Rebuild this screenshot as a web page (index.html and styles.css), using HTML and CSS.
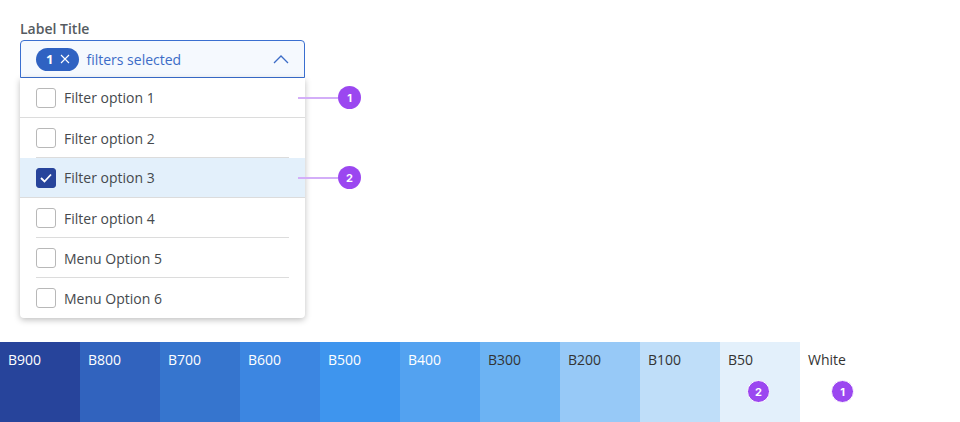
FILE: index.html
```html
<!DOCTYPE html>
<html lang="en">
<head>
  <meta charset="UTF-8" />
  <meta name="viewport" content="width=device-width, initial-scale=1.0">
  <title>Multi select dropdown</title>
  <link rel="stylesheet" href="styles.css">
</head>
<body>

<div class="top">
  <div class="field">
    <div class="label">Label Title</div>
    <div class="select">
      <span class="chip">1
        <svg width="10" height="10" viewBox="0 0 10 10"><path d="M1 1 L9 9 M9 1 L1 9" stroke="#fff" stroke-width="1.1" fill="none"/></svg>
      </span>
      <span class="placeholder">filters selected</span>
      <svg class="chevron" width="16" height="9" viewBox="0 0 16 9"><path d="M1 8 L8 1 L15 8" stroke="#3c6cc7" stroke-width="1.3" fill="none"/></svg>
    </div>

    <div class="menu">
      <div class="option full">
        <span class="box"></span>Filter option 1
        <div class="note"><span class="line"></span><span class="badge">1</span></div>
      </div>
      <div class="option inset"><span class="box"></span>Filter option 2</div>
      <div class="option selected full">
        <span class="box checked">
          <svg width="12" height="10" viewBox="0 0 12 10"><path d="M1 5 L4.5 8.5 L11 1.5" stroke="#fff" stroke-width="1.8" fill="none"/></svg>
        </span>Filter option 3
        <div class="note"><span class="line"></span><span class="badge">2</span></div>
      </div>
      <div class="option inset"><span class="box"></span>Filter option 4</div>
      <div class="option inset"><span class="box"></span>Menu Option 5</div>
      <div class="option"><span class="box"></span>Menu Option 6</div>
    </div>
  </div>
</div>

<div class="palette">
  <div class="swatch dark" style="background:#27449b">B900</div>
  <div class="swatch dark" style="background:#3163be">B800</div>
  <div class="swatch dark" style="background:#3675ce">B700</div>
  <div class="swatch dark" style="background:#3c86e1">B600</div>
  <div class="swatch dark" style="background:#3e95ee">B500</div>
  <div class="swatch dark" style="background:#53a2f0">B400</div>
  <div class="swatch" style="background:#6cb3f3">B300</div>
  <div class="swatch" style="background:#97c9f7">B200</div>
  <div class="swatch" style="background:#bfdef9">B100</div>
  <div class="swatch" style="background:#e3f0fb">B50<span class="badge ring">2</span></div>
  <div class="swatch" style="background:#ffffff">White<span class="badge ring">1</span></div>
</div>

</body>
</html>
```

FILE: styles.css
```css
* { box-sizing: border-box; }
html, body {
  margin: 0;
  padding: 0;
  background: #ffffff;
  font-family: "Open Sans", "Noto Sans", sans-serif;
  width: 100%;
  height: 100%;
  overflow: hidden;
}

.top {
  height: 342px;
  padding: 19px 0 0 20px;
}

.field {
  width: 285px;
  position: relative;
}

.label {
  font-size: 14px;
  font-weight: 600;
  color: #555b61;
  line-height: 20px;
  margin-bottom: 1px;
}

.select {
  height: 38px;
  border: 1px solid #3a6fd0;
  border-radius: 4px 4px 0 0;
  background: #f5f9fe;
  display: flex;
  align-items: center;
  padding: 0 15px;
}

.chip {
  display: flex;
  align-items: center;
  gap: 7px;
  height: 23px;
  padding: 0 9px 0 10px;
  border-radius: 12px;
  background: #2f62c2;
  color: #fff;
  font-size: 13px;
  font-weight: 700;
}

.placeholder {
  margin-left: 7px;
  color: #3c6cc7;
  font-size: 14px;
  flex: 1;
}

.menu {
  background: #fff;
  border-radius: 0 0 4px 4px;
  box-shadow: 0 2px 6px rgba(0, 0, 0, 0.25);
}

.option {
  height: 40px;
  display: flex;
  align-items: center;
  padding-left: 16px;
  font-size: 14px;
  color: #45494d;
  position: relative;
}

.option.full { border-bottom: 1px solid #dcdcdc; }

.option.inset::after {
  content: "";
  position: absolute;
  left: 16px;
  right: 16px;
  bottom: 0;
  border-bottom: 1px solid #dcdcdc;
}

.option.selected { background: #e3f0fb; }

.box {
  width: 20px;
  height: 20px;
  border: 1px solid #b8b8b8;
  border-radius: 3px;
  margin-right: 8px;
  display: flex;
  align-items: center;
  justify-content: center;
  background: #fff;
}

.box.checked {
  background: #27449b;
  border-color: #27449b;
}

.note {
  position: absolute;
  left: 278px;
  top: 8px;
  display: flex;
  align-items: center;
}

.note .line {
  width: 40px;
  height: 2px;
  background: #d3aef8;
}

.badge {
  width: 23px;
  height: 23px;
  border-radius: 50%;
  background: #9b47f0;
  color: #fff;
  font-family: Inter, "Noto Sans", sans-serif;
  font-weight: 700;
  font-size: 11px;
  display: flex;
  align-items: center;
  justify-content: center;
}

.palette {
  display: flex;
  height: 80px;
}

.swatch {
  width: 80px;
  padding: 8px 0 0 8px;
  font-size: 14px;
  color: #333;
  line-height: 20px;
  display: flex;
  flex-direction: column;
}

.swatch.dark { color: #fff; }

.badge.ring {
  border: 1px solid #fff;
  margin: 10px 0 0 19px;
}

.swatch:last-child .badge.ring { margin-left: 23px; }
```
